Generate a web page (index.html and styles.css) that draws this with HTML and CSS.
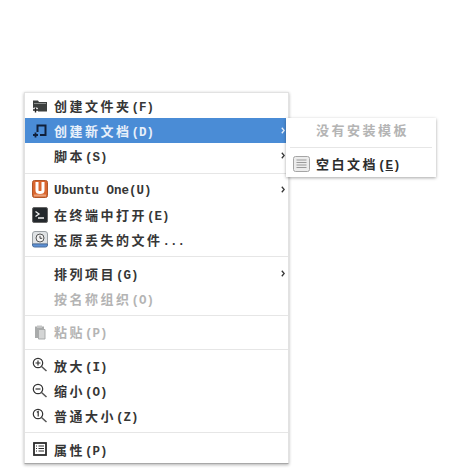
FILE: index.html
```html
<!DOCTYPE html>
<html lang="zh">
<head>
<meta charset="utf-8">
<title>Menu</title>
<link rel="stylesheet" href="styles.css">
</head>
<body>
<div class="menu">
  <div class="row"><span class="ico"><svg width="16" height="16" viewBox="0 0 16 16"><path d="M1 4V2.500h5l1 1.500h8v9.500H6V13H1z" fill="#3c3f3e"/><path d="M2 5.500h12" stroke="#8a8d8c"/><path d="M3.500 9.500v5M1 12h5" stroke="#fff" stroke-width="3.500"/><path d="M3.500 9.500v5M1 12h5" stroke="#222" stroke-width="1.400"/></svg></span><span class="lbl"><span class="zh">创建文件夹</span>(F)</span></div>
  <div class="row active"><span class="ico"><svg width="16" height="16" viewBox="0 0 16 16"><path d="M5.500 9V2.500h8V12H8" fill="none" stroke="#10203a" stroke-width="2"/><path d="M3.500 9.500v5M1 12h5" stroke="#10203a" stroke-width="1.800"/></svg></span><span class="lbl"><span class="zh">创建新文档</span>(D)</span><svg class="arrow" width="4" height="7" viewBox="0 0 4 7"><path d="M.8.800 3.200 3.500.8 6.200" fill="none" stroke="currentColor" stroke-width="1.300"/></svg></div>
  <div class="row"><span class="ico"></span><span class="lbl"><span class="zh">脚本</span>(S)</span><svg class="arrow" width="4" height="7" viewBox="0 0 4 7"><path d="M.8.800 3.200 3.500.8 6.200" fill="none" stroke="currentColor" stroke-width="1.300"/></svg></div>
  <div class="sep"></div>
  <div class="row"><span class="ico"><svg width="16" height="18" viewBox="0 0 16 18"><rect x=".5" y=".5" width="15" height="17" rx="2" fill="#d9662f" stroke="#b0562a"/><path d="M5 2v8.500c0 2.800 6 2.800 6 0V2" fill="none" stroke="#fff" stroke-width="3"/><path d="M2 15.500h12" stroke="#eba27a" stroke-width="2"/></svg></span><span class="lbl latin">Ubuntu One(U)</span><svg class="arrow" width="4" height="7" viewBox="0 0 4 7"><path d="M.8.800 3.200 3.500.8 6.200" fill="none" stroke="currentColor" stroke-width="1.300"/></svg></div>
  <div class="row"><span class="ico"><svg width="16" height="16" viewBox="0 0 16 16"><rect x=".5" y=".5" width="15" height="15" rx="1.500" fill="#23282c" stroke="#666"/><path d="M3.500 4.500 7 7l-3.500 2.500M6 11h6" fill="none" stroke="#f0f0f0" stroke-width="1.300"/></svg></span><span class="lbl"><span class="zh">在终端中打开</span>(E)</span></div>
  <div class="row"><span class="ico"><svg width="16" height="17" viewBox="0 0 16 17"><path d="M.5 13V3a2.500 2.500 0 0 1 2.500-2.500h10A2.500 2.500 0 0 1 15.500 3v10z" fill="#dfe2e4" stroke="#9aa0a4"/><path d="M.5 13h15v1a2 2 0 0 1-2 2h-11a2 2 0 0 1-2-2z" fill="#5c90d4" stroke="#4a6d9c"/><circle cx="8" cy="7" r="4" fill="#f1f1f1" stroke="#555"/><path d="M8 4.800v2.500h2.200" fill="none" stroke="#444"/></svg></span><span class="lbl"><span class="zh">还原丢失的文件</span>...</span></div>
  <div class="sep"></div>
  <div class="row"><span class="ico"></span><span class="lbl"><span class="zh">排列项目</span>(G)</span><svg class="arrow" width="4" height="7" viewBox="0 0 4 7"><path d="M.8.800 3.200 3.500.8 6.200" fill="none" stroke="currentColor" stroke-width="1.300"/></svg></div>
  <div class="row off"><span class="ico"></span><span class="lbl"><span class="zh">按名称组织</span>(O)</span></div>
  <div class="sep"></div>
  <div class="row off"><span class="ico"><svg width="16" height="16" viewBox="0 0 16 16"><path d="M3 2.500h9V14H3z" fill="#a9abab"/><path d="M5 1.500h5v2.500H5z" fill="#c4c5c5"/><path d="M6.500 5.500h6.500V15H6.500z" fill="#d4d5d5" stroke="#a9abab"/></svg></span><span class="lbl"><span class="zh">粘贴</span>(P)</span></div>
  <div class="sep"></div>
  <div class="row"><span class="ico"><svg width="16" height="16" viewBox="0 0 16 16"><circle cx="6" cy="6" r="4.700" fill="none" stroke="#333" stroke-width="1.200"/><path d="M6 3.500v5M3.500 6h5" stroke="#333" stroke-width="1.200"/><path d="M9.500 9.500 14.500 14" stroke="#555" stroke-width="1.500"/></svg></span><span class="lbl"><span class="zh">放大</span>(I)</span></div>
  <div class="row"><span class="ico"><svg width="16" height="16" viewBox="0 0 16 16"><circle cx="6" cy="6" r="4.700" fill="none" stroke="#333" stroke-width="1.200"/><path d="M3.500 6h5" stroke="#333" stroke-width="1.200"/><path d="M9.500 9.500 14.500 14" stroke="#555" stroke-width="1.500"/></svg></span><span class="lbl"><span class="zh">缩小</span>(O)</span></div>
  <div class="row"><span class="ico"><svg width="16" height="16" viewBox="0 0 16 16"><circle cx="6" cy="6" r="4.700" fill="none" stroke="#333" stroke-width="1.200"/><path d="M4.800 4.300 6.200 3.500v5" fill="none" stroke="#333" stroke-width="1.200"/><path d="M9.500 9.500 14.500 14" stroke="#555" stroke-width="1.500"/></svg></span><span class="lbl"><span class="zh">普通大小</span>(Z)</span></div>
  <div class="sep"></div>
  <div class="row"><span class="ico"><svg width="16" height="16" viewBox="0 0 16 16"><rect x="2" y="2" width="12" height="12" fill="#fff" stroke="#2b2b2b" stroke-width="1.800"/><path d="M4 5h1M4 7.500h1M4 10h1M6.500 5h5.500M6.500 7.500h5.500M6.500 10h5.500" stroke="#2b2b2b"/></svg></span><span class="lbl"><span class="zh">属性</span>(P)</span></div>
  <div class="submenu">
    <div class="sub-head">没有安装模板</div>
    <div class="sep sub-sep"></div>
    <div class="sub-row"><svg class="sub-ico" width="17" height="16" viewBox="0 0 17 16"><rect x=".5" y=".5" width="16" height="15" rx="2" fill="#ececec" stroke="#a5a5a5"/><path d="M3.500 4h10M3.500 6.500h10M3.500 9h10M3.500 11.500h10" stroke="#9a9a9a"/></svg><span class="lbl"><span class="zh">空白文档</span>(<u>E</u>)</span></div>
  </div>
</div>
</body>
</html>
```

FILE: styles.css
```css
html, body {
  margin: 0;
  padding: 0;
  background: #fff;
}
body {
  width: 459px;
  height: 472px;
  overflow: hidden;
  font-family: "Liberation Mono", "Noto Sans CJK SC", monospace;
  font-size: 12.500px;
  font-weight: 700;
  color: #363636;
}
.menu {
  position: relative;
  box-sizing: border-box;
  width: 265px;
  height: 372px;
  margin: 92px 0 0 24px;
  background: #fff;
  border: 1px solid #e2e2e2;
  border-bottom-color: #a8a8a8;
  box-shadow: 0 1px 3px rgba(0, 0, 0, .3);
}
.row {
  display: flex;
  align-items: center;
  height: 25.200px;
  padding-left: 7px;
}
.ico {
  display: flex;
  align-items: center;
  justify-content: center;
  width: 16px;
  height: 18px;
  margin-right: 6px;
  flex: none;
}
.lbl {
  white-space: nowrap;
}
.latin {
  padding-top: 3px;
}
.zh {
  font-size: 13px;
  letter-spacing: 2.500px;
}
.arrow {
  margin-left: auto;
  margin-right: 3px;
  flex: none;
}
.active {
  background: #4a8cd6;
  color: #e8f0fa;
}
.off {
  color: #b4b4b4;
}
.sep {
  height: 1px;
  margin: 4px 0 3.300px;
  background: #e6e6e6;
}
.submenu {
  position: absolute;
  left: 261px;
  top: 25px;
  box-sizing: border-box;
  width: 150px;
  height: 59px;
  background: #fff;
  box-shadow: 0 1px 3px rgba(0, 0, 0, .35);
  display: flex;
  flex-direction: column;
}
.sub-head {
  height: 29px;
  line-height: 28px;
  padding-left: 30px;
  font-size: 13px;
  color: #b4b4b4;
  letter-spacing: 2.500px;
}
.submenu .sub-sep {
  margin: 0 4px;
  flex: none;
}
.sub-row {
  display: flex;
  align-items: center;
  flex: 1;
  padding: 2px 0 0 7px;
  gap: 6px;
  color: #2c2c2c;
}
.sub-ico {
  flex: none;
}
```
